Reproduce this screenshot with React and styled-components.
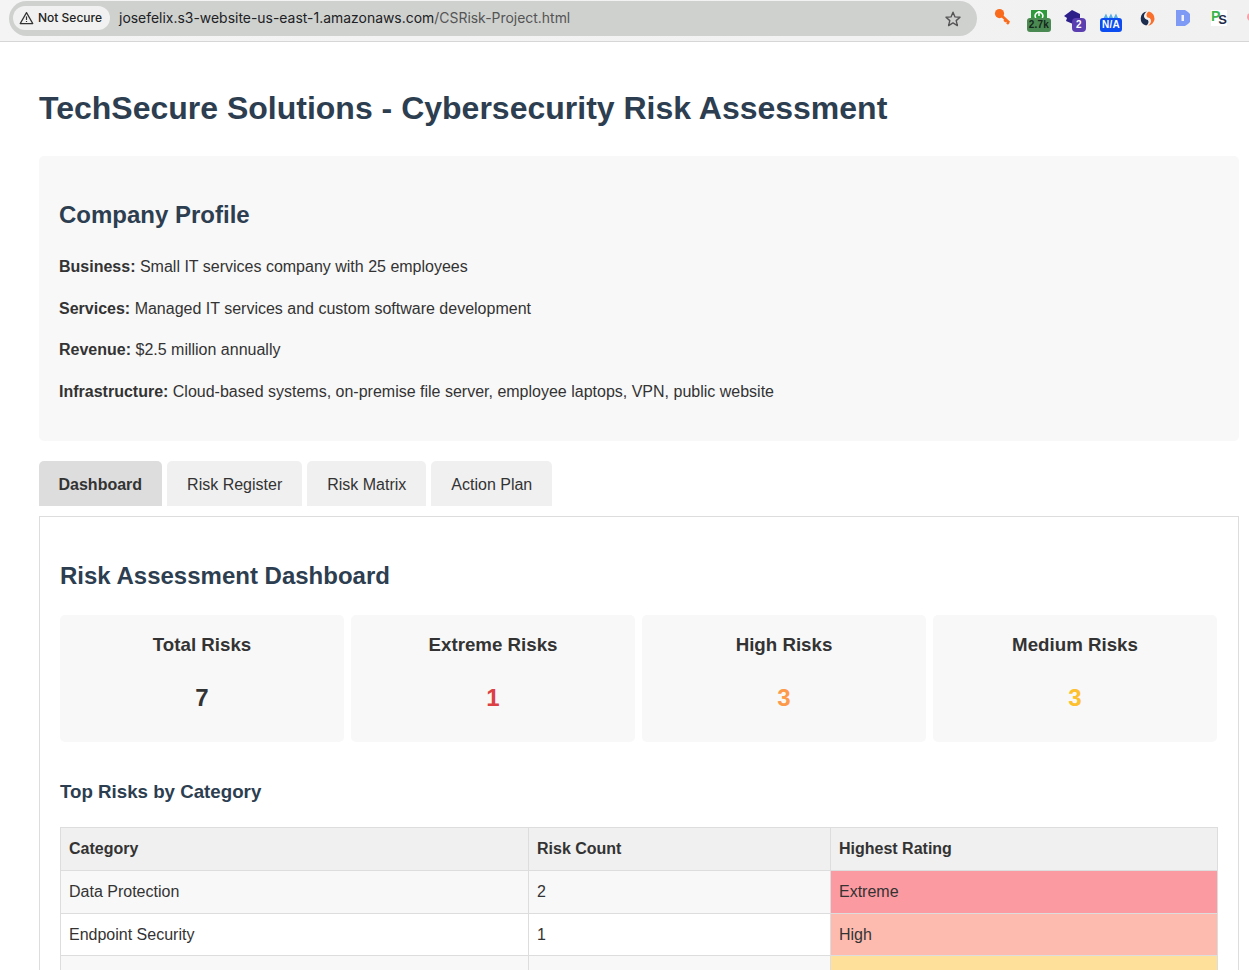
import styled, { createGlobalStyle } from "styled-components";

const GlobalStyle = createGlobalStyle`
	html, body {
		margin: 0;
		padding: 0;
		height: 970px;
		overflow: hidden;
		background: #fff;
	}
	body {
		font-family: "Liberation Sans", Arial, sans-serif;
		font-size: 16px;
		line-height: 1.6;
		color: #333;
	}
	* {
		box-sizing: border-box;
	}
`;

const stats = [
	{ label: "Total Risks", value: 7, color: "#333" },
	{ label: "Extreme Risks", value: 1, color: "#dc4045" },
	{ label: "High Risks", value: 3, color: "#fd9a4a" },
	{ label: "Medium Risks", value: 3, color: "#fdc02e" },
];

const categories = [
	{ name: "Data Protection", count: 2, rating: "Extreme", tone: "#fc9aa1" },
	{ name: "Endpoint Security", count: 1, rating: "High", tone: "#fdbbaf" },
	{ name: "Access Control", count: 2, rating: "Medium", tone: "#ffe09a" },
];

const profile = [
	["Business:", "Small IT services company with 25 employees"],
	["Services:", "Managed IT services and custom software development"],
	["Revenue:", "$2.5 million annually"],
	["Infrastructure:", "Cloud-based systems, on-premise file server, employee laptops, VPN, public website"],
];

const tabs = ["Dashboard", "Risk Register", "Risk Matrix", "Action Plan"];

export default function App() {
	return (
		<>
			<GlobalStyle />
			<BrowserBar>
				<UrlPill>
					<SecurityChip>
						<svg width="15" height="14" viewBox="0 0 15 14" fill="none" stroke="#333" strokeWidth="1.2">
							<path d="M7.5 1.6 L13.8 12.6 H1.2 Z" strokeLinejoin="round" />
							<path d="M7.5 5.4 V9" />
							<path d="M7.5 10 V11" />
						</svg>
						Not Secure
					</SecurityChip>
					<UrlText>
						josefelix.s3-website-us-east-1.amazonaws.com<UrlPath>/CSRisk-Project.html</UrlPath>
					</UrlText>
					<StarIcon width="18" height="18" viewBox="0 0 18 18" fill="none" stroke="#555" strokeWidth="1.4">
						<path d="M9 2.2 L11 6.9 L16 7.3 L12.2 10.6 L13.4 15.6 L9 12.9 L4.6 15.6 L5.8 10.6 L2 7.3 L7 6.9 Z" strokeLinejoin="round" />
					</StarIcon>
				</UrlPill>
				<Extensions>
					<ExtensionSlot>
						<svg width="18" height="18" viewBox="0 0 18 18" fill="none">
							<circle cx="5.5" cy="5.6" r="4.6" fill="#f96a1c" />
							<path d="M7.5 7.5 L15.2 14.8 M12 11.8 L10.4 13.6 M14.6 14.2 L13 16" stroke="#f96a1c" strokeWidth="2.6" />
						</svg>
					</ExtensionSlot>
					<ExtensionSlot>
						<IconFrame $w={24}>
							<svg width="16" height="8" viewBox="0 0 16 8">
								<rect width="16" height="8" fill="#2f9a3c" />
								<path d="M4.8 8 A3.8 3.8 0 1 1 11.2 8" fill="none" stroke="#fff" strokeWidth="1.5" />
								<path d="M8 1 V6" stroke="#fff" strokeWidth="1.5" />
							</svg>
							<CountBadge $bg="#4a8a52" $color="#14261a" $w={24}>2.7k</CountBadge>
						</IconFrame>
					</ExtensionSlot>
					<ExtensionSlot>
						<IconFrame $w={22}>
							<PurpleShape width="18" height="14" viewBox="0 0 18 14">
								<path d="M0 6 L8 0 L16 4 L16 10 L9 14 L2 11 L3 8 Z" fill="#2c1f8a" />
							</PurpleShape>
							<CountBadge $bg="#5b3fb0" $color="#fff" $w={14} $round>2</CountBadge>
						</IconFrame>
					</ExtensionSlot>
					<ExtensionSlot>
						<IconFrame $w={22}>
							<WaveIcon width="16" height="6" viewBox="0 0 16 6" fill="#57aee8">
								<path d="M3 .5 L.6 5 H5 Z M8 .5 L5.6 5 H10 Z M13 .5 L10.6 5 H15 Z" />
							</WaveIcon>
							<CountBadge $bg="#0b4df0" $color="#fff" $w={22}>N/A</CountBadge>
						</IconFrame>
					</ExtensionSlot>
					<ExtensionSlot>
						<OffsetIcon $top={3} width="15" height="15" viewBox="0 0 16 16">
							<path d="M9.5 .6 A7.6 7.6 0 0 1 8.6 15.6 C 13.4 12 12.4 7.2 7.6 6.6 C 6.2 4.6 7 1.6 9.5 .6 Z" fill="#f9702c" />
							<path d="M6.6 15.4 A7.6 7.6 0 0 1 7.2 .5 C 2.6 4 3.8 8.8 8.4 9.6 C 9.8 11.4 9 14.4 6.6 15.4 Z" fill="#1d2d4f" />
						</OffsetIcon>
					</ExtensionSlot>
					<ExtensionSlot>
						<OffsetIcon $top={2} width="14" height="16" viewBox="0 0 14 16">
							<path fillRule="evenodd" d="M0 0 H9 L12 2 L14 4 V12 L12 14 L9 16 H0 Z M5.5 5 V11 H8 V5 Z" fill="#7f9af5" />
						</OffsetIcon>
					</ExtensionSlot>
					<ExtensionSlot>
						<PsMark>
							<PsLetter $color="#3bb54a">P</PsLetter>
							<PsLetter $color="#1e2b4a" $low>S</PsLetter>
						</PsMark>
					</ExtensionSlot>
				</Extensions>
				<CutOffDot />
			</BrowserBar>

			<Page>
				<MainTitle>TechSecure Solutions - Cybersecurity Risk Assessment</MainTitle>

				<ProfilePanel>
					<SectionTitle>Company Profile</SectionTitle>
					{profile.map(([label, text]) => (
						<ProfileLine key={label}>
							<strong>{label}</strong> {text}
						</ProfileLine>
					))}
				</ProfilePanel>

				<TabRow>
					{tabs.map((t, i) => (
						<Tab key={t} $active={i === 0}>
							{t}
						</Tab>
					))}
				</TabRow>

				<TabContent>
					<DashboardTitle>Risk Assessment Dashboard</DashboardTitle>
					<StatGrid>
						{stats.map((s) => (
							<StatCard key={s.label}>
								<StatLabel>{s.label}</StatLabel>
								<StatValue $color={s.color}>{s.value}</StatValue>
							</StatCard>
						))}
					</StatGrid>

					<SubTitle>Top Risks by Category</SubTitle>
					<RiskTable>
						<colgroup>
							<col style={{ width: 468 }} />
							<col style={{ width: 302 }} />
							<col style={{ width: 387 }} />
						</colgroup>
						<thead>
							<tr>
								<HeadCell>Category</HeadCell>
								<HeadCell>Risk Count</HeadCell>
								<HeadCell>Highest Rating</HeadCell>
							</tr>
						</thead>
						<tbody>
							{categories.map((c) => (
								<BodyRow key={c.name}>
									<Cell>{c.name}</Cell>
									<Cell>{c.count}</Cell>
									<RatingCell $tone={c.tone}>{c.rating}</RatingCell>
								</BodyRow>
							))}
						</tbody>
					</RiskTable>
				</TabContent>
			</Page>
		</>
	);
}

const BrowserBar = styled.div`
	align-items: flex-start;
	background: linear-gradient(90deg, #f4f4f4, #f1f1f1);
	border-bottom: 1px solid #d6d6d6;
	display: flex;
	height: 42px;
	overflow: hidden;
	padding: 1px 0 0 9px;
	position: relative;
`;

const UrlPill = styled.div`
	align-items: center;
	background: #cfd1cf;
	border-radius: 18px;
	display: flex;
	flex: 0 0 968px;
	height: 35px;
	padding: 0 15px 0 4px;
`;

const SecurityChip = styled.div`
	align-items: center;
	background: #f0f1f0;
	border-radius: 12px;
	color: #222;
	display: flex;
	font-family: Inter, sans-serif;
	font-size: 12px;
	font-weight: 500;
	gap: 4px;
	height: 24px;
	margin-top: -1px;
	padding: 0 7px 0 6px;
	white-space: nowrap;
	width: 97px;
`;

const UrlText = styled.div`
	color: #202124;
	flex: 1;
	font-family: Inter, sans-serif;
	font-size: 13.95px;
	margin: -1px 0 0 9px;
	white-space: nowrap;
`;

const UrlPath = styled.span`
	color: #555;
`;

const StarIcon = styled.svg`
	flex: none;
`;

const Extensions = styled.div`
	display: flex;
	margin: 7px 0 0 8px;
`;

const ExtensionSlot = styled.div`
	display: flex;
	flex: 0 0 36px;
	height: 24px;
	justify-content: center;
`;

const IconFrame = styled.div`
	align-items: center;
	display: flex;
	flex-direction: column;
	height: 24px;
	padding-top: 2px;
	position: relative;
	width: ${(p) => p.$w}px;
`;

const PurpleShape = styled.svg`
	left: 0;
	position: absolute;
	top: 2px;
`;

const WaveIcon = styled.svg`
	margin-top: 3px;
`;

const OffsetIcon = styled.svg`
	margin-top: ${(p) => p.$top}px;
`;

const CountBadge = styled.span`
	background: ${(p) => p.$bg};
	border-radius: ${(p) => (p.$round ? 4 : 3)}px;
	bottom: 0;
	color: ${(p) => p.$color};
	font-family: "Liberation Sans", sans-serif;
	font-size: 10px;
	font-weight: 700;
	letter-spacing: 0.2px;
	line-height: 14px;
	position: absolute;
	right: 0;
	text-align: center;
	width: ${(p) => p.$w}px;
`;

const PsMark = styled.div`
	background: #fff;
	display: flex;
	font-family: "Liberation Sans", sans-serif;
	font-weight: 700;
	height: 16px;
	line-height: 12px;
	margin-top: 2px;
	width: 16px;
`;

const PsLetter = styled.span`
	color: ${(p) => p.$color};
	font-size: ${(p) => (p.$low ? 13 : 14)}px;
	margin-top: ${(p) => (p.$low ? 4 : 0)}px;
	margin-left: ${(p) => (p.$low ? -2 : 0)}px;
`;

const CutOffDot = styled.div`
	background: #f7a0a8;
	border-radius: 50%;
	height: 8px;
	position: absolute;
	right: -6px;
	top: 13px;
	width: 8px;
`;

const Page = styled.div`
	padding: 0 10px 0 39px;
	width: 1249px;
`;

const MainTitle = styled.h1`
	color: #2c3e50;
	font-size: 32px;
	font-weight: 700;
	line-height: 51px;
	margin: 41px 0 22px;
`;

const ProfilePanel = styled.section`
	background: #f8f8f8;
	border-radius: 5px;
	height: 285px;
	margin-bottom: 20px;
	padding: 20px;
`;

const SectionTitle = styled.h2`
	color: #2c3e50;
	font-size: 24px;
	font-weight: 700;
	line-height: 38px;
	margin: 20px 0 20px;
`;

const DashboardTitle = styled(SectionTitle)`
	margin-bottom: 16px;
`;

const ProfileLine = styled.p`
	font-size: 16px;
	line-height: 25.6px;
	margin: 0 0 16px;
`;

const TabRow = styled.div`
	display: flex;
	gap: 5px;
	margin-bottom: 10px;
`;

const Tab = styled.div`
	background: ${(p) => (p.$active ? "#ddd" : "#f0f0f0")};
	border-radius: 5px 5px 0 0;
	font-weight: ${(p) => (p.$active ? 700 : 400)};
	height: 45px;
	line-height: 26px;
	padding: ${(p) => (p.$active ? "11px 19.5px 8px" : "11px 19.5px 8px 20.5px")};
`;

const TabContent = styled.section`
	border: 1px solid #ddd;
	height: 600px;
	padding: 20px;
`;

const StatGrid = styled.div`
	display: grid;
	gap: 7px;
	grid-template-columns: repeat(4, 284px);
	margin-top: 20px;
`;

const StatCard = styled.div`
	background: #f8f8f8;
	border-radius: 5px;
	height: 127px;
	padding: 15px;
	text-align: center;
`;

const StatLabel = styled.h3`
	color: #333;
	font-size: 18.72px;
	font-weight: 700;
	line-height: 30px;
	margin: 0 0 23px;
`;

const StatValue = styled.div`
	color: ${(p) => p.$color};
	font-size: 24px;
	font-weight: 700;
	line-height: 30px;
`;

const SubTitle = styled.h3`
	color: #2c3e50;
	font-size: 18.72px;
	font-weight: 700;
	line-height: 30px;
	margin: 35px 0 20px;
`;

const RiskTable = styled.table`
	border-collapse: collapse;
	table-layout: fixed;
	width: 1157px;
`;

const HeadCell = styled.th`
	background: #f0f0f0;
	border: 1px solid #ddd;
	font-weight: 700;
	height: 43px;
	padding: 8px;
	text-align: left;
`;

const Cell = styled.td`
	border: 1px solid #ddd;
	line-height: 25.6px;
	padding: 8px;
`;

const BodyRow = styled.tr`
	&:nth-child(odd) {
		background: #f8f8f8;
	}
`;

const RatingCell = styled(Cell)`
	background: ${(p) => p.$tone};
`;
